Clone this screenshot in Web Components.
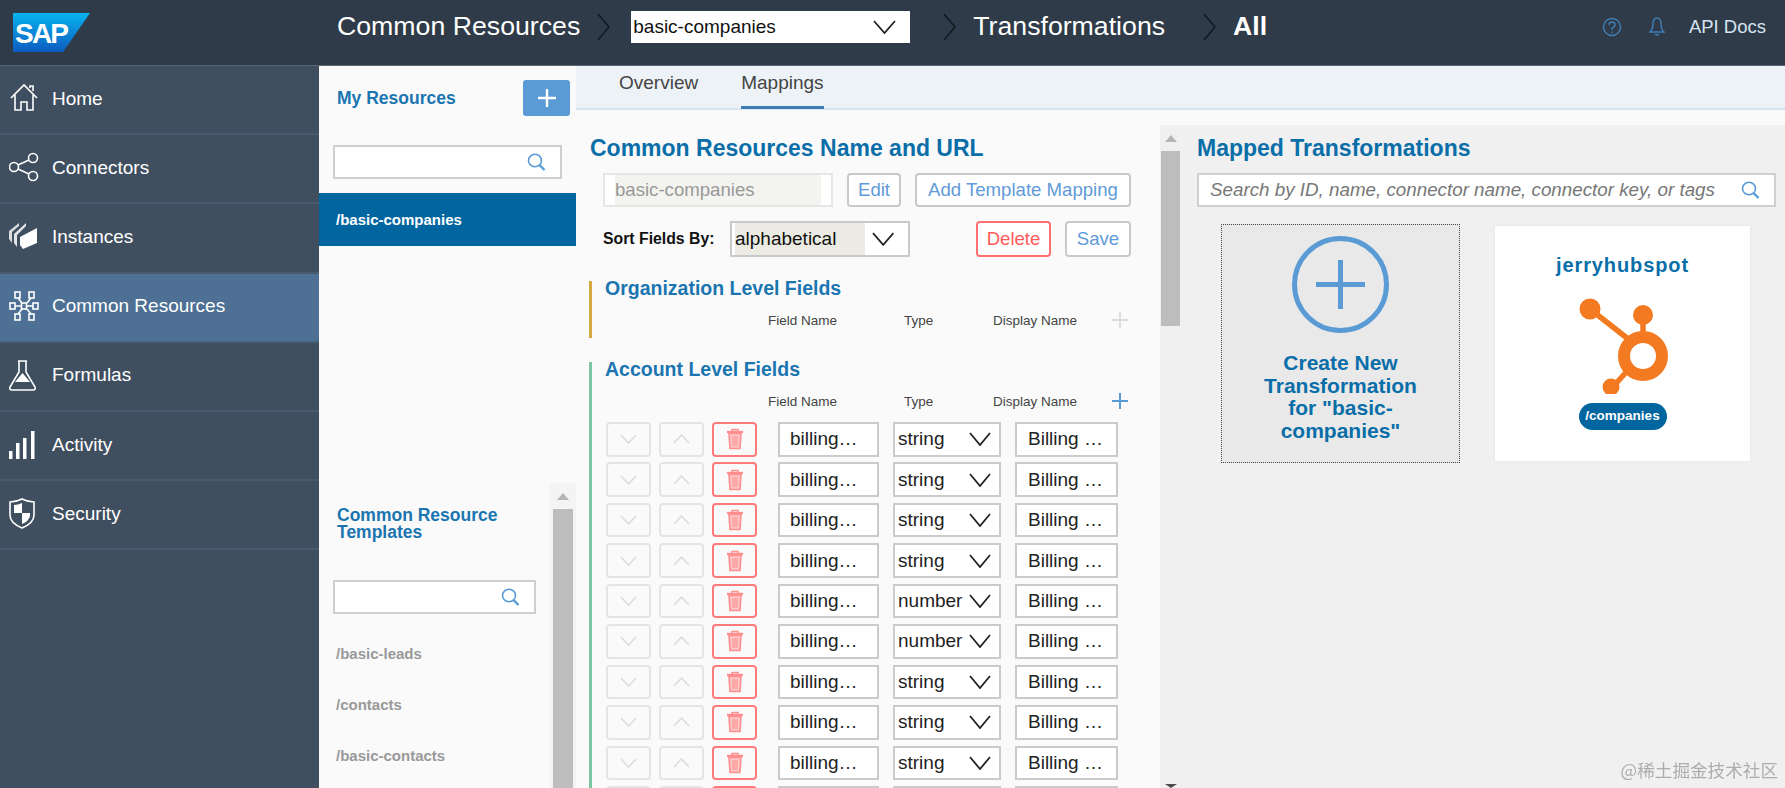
<!DOCTYPE html>
<html lang="en">
<head>
<meta charset="utf-8">
<title>Common Resources</title>
<style>
  html, body { margin: 0; height: 100%; overflow: hidden; }
  body { font-family: "Liberation Sans", Arial, sans-serif; background: #fafafa; }
</style>
</head>
<body>
<app-shell>
  <top-bar slot="top"></top-bar>
  <side-nav slot="nav">
    <nav-item icon="home">Home</nav-item>
    <nav-item icon="connectors">Connectors</nav-item>
    <nav-item icon="instances">Instances</nav-item>
    <nav-item icon="resources" active>Common Resources</nav-item>
    <nav-item icon="formulas">Formulas</nav-item>
    <nav-item icon="activity">Activity</nav-item>
    <nav-item icon="security">Security</nav-item>
  </side-nav>
  <resource-panel slot="list"></resource-panel>
  <main-view slot="main"></main-view>
</app-shell>
<water-mark>@稀土掘金技术社区</water-mark>

<script>
const chevron = (w, h, color, sw, up) => `<svg width="${w}" height="${h}" viewBox="0 0 ${w} ${h}" fill="none" stroke="${color}" stroke-width="${sw}"><path d="${up ? `M1 ${h - 1}L${w / 2} 1L${w - 1} ${h - 1}` : `M1 1L${w / 2} ${h - 1}L${w - 1} 1`}"/></svg>`

const navIcons = {
  home: `<path d="M2 15L15 2l13 13M6 12v15h6v-8h6v8h6V12M21 5V3h3v5"/>`,
  connectors: `<circle cx="24" cy="6" r="4.5"/><circle cx="5" cy="15" r="4.5"/><circle cx="24" cy="24" r="4.5"/><path d="M9 13l11-5M9 17l11 5"/>`,
  instances: `<g fill="#fff" stroke="none"><path d="M0 10l10-8v3L3 11v11l-3-4z" opacity=".8"/><path d="M5 13L17 2v3L8 14v12l-3-4z" opacity=".85"/><path d="M11 16l17-9v15l-14 6-3-4z"/></g>`,
  resources: `<rect x="6" y="1" width="5" height="6"/><rect x="20" y="1" width="5" height="6"/><rect x="1" y="12" width="5" height="6"/><rect x="12.5" y="12" width="5" height="6"/><rect x="24" y="12" width="5" height="6"/><rect x="6" y="23" width="5" height="6"/><rect x="20" y="23" width="5" height="6"/><path d="M6 15h6.500M17.500 15H24M9 7l4 5M22 7l-4 5M9 23l4-5M22 23l-4-5"/>`,
  formulas: `<path d="M9 1h9M10 1v11L1 27q-1 3 2 3h21q3 0 2-3l-9-15V1"/><path d="M6 22l7.500-9 7.500 9z" fill="#fff" stroke="none"/>`,
  activity: `<g fill="#fff" stroke="none"><rect x="0" y="22" width="3.500" height="8"/><rect x="7" y="14" width="3.500" height="16"/><rect x="14" y="9" width="3.500" height="21"/><rect x="22" y="2" width="3.500" height="28"/></g>`,
  security: `<path d="M13 1q6 3 12 3v13q0 8-12 13Q1 25 1 17V4q6 0 12-3z"/><path d="M5 7q4 0 8-2v10H5zM13 15h8v3q-1 5-8 8z" fill="#fff" stroke="none"/>`
}

class AppShell extends HTMLElement {
  constructor() {
    super()
    this.attachShadow({ mode: 'open' })
    this.shadowRoot.innerHTML = `
    <style>
      :host { display: grid; width: 1785px; height: 788px; overflow: hidden;
        grid-template-columns: 319px 257px 1fr; grid-template-rows: 66px 722px; }
      ::slotted([slot=top]) { grid-column: 1 / 4; }
    </style>
    <slot name="top"></slot><slot name="nav"></slot><slot name="list"></slot><slot name="main"></slot>`
  }
}

class TopBar extends HTMLElement {
  constructor() {
    super()
    this.attachShadow({ mode: 'open' })
    const sep = `<svg class="sep" width="13" height="28" viewBox="0 0 13 28" fill="none" stroke="#11181f" stroke-width="1.500"><path d="M1 1l11 13L1 27"/></svg>`
    this.shadowRoot.innerHTML = `
    <style>
      :host { display: flex; align-items: center; box-sizing: border-box; height: 66px; padding: 0 19px 12px 0;
        background: #2f3b48; border-bottom: 1px solid #5c6672; color: #fff; font-size: 26.700px; }
      .logo { width: 337px; padding: 12px 0 0 13px; box-sizing: border-box; }
      .logo svg { display: block; }
      .sep { margin: 0 17px; }
      .pick { display: flex; align-items: center; justify-content: space-between; box-sizing: border-box; width: 279px; height: 32px;
        padding: 0 14px 0 2px; margin: 0 16px 0 4px; background: #fff; color: #111; font-size: 19px; }
      .all { font-weight: 700; }
      .tools { display: flex; align-items: center; margin-left: auto; color: #d5e4f0; font-size: 18.500px; }
      .help { margin-right: 27px; }
      .bell { margin-right: 24px; }
    </style>
    <div class="logo"><svg width="78" height="39" viewBox="0 0 78 39">
      <defs><linearGradient id="sapg" x1="0" y1="0" x2="0" y2="1"><stop offset="0" stop-color="#08b4ee"/><stop offset="1" stop-color="#0c5cc0"/></linearGradient></defs>
      <path d="M0 0H77L50 39H0z" fill="url(#sapg)"/>
      <text x="2" y="30" font-family="Liberation Sans" font-weight="700" font-size="28" letter-spacing="-1.800" fill="#fff">SAP</text>
    </svg></div>
    <span>Common Resources</span>
    ${sep}
    <span class="pick">basic-companies ${chevron(23, 14, '#222', 1.8)}</span>
    ${sep}
    <span>Transformations</span>
    <span style="margin-left:21px"></span>${sep}
    <span class="all">All</span>
    <div class="tools">
      <svg class="help" width="20" height="20" viewBox="0 0 20 20" fill="none" stroke="#3f7fb5" stroke-width="1.400"><circle cx="10" cy="10" r="8.500"/><path d="M7 8q0-3 3-3t3 3q0 2-3 3v2M10 14.500v1.500"/></svg>
      <svg class="bell" width="16" height="20" viewBox="0 0 16 20" fill="none" stroke="#3f7fb5" stroke-width="1.400"><path d="M8 1q4 0 4 6 0 5 3 8H1q3-3 3-8 0-6 4-6zM6 17q2 2 4 0"/></svg>
      <span>API Docs</span>
    </div>`
  }
}

class SideNav extends HTMLElement {
  constructor() {
    super()
    this.attachShadow({ mode: 'open' })
    this.shadowRoot.innerHTML = `
    <style>:host { display: flex; flex-direction: column; background: #3f4f5f; }</style>
    <slot></slot>`
  }
}

class NavItem extends HTMLElement {
  constructor() {
    super()
    this.attachShadow({ mode: 'open' })
    const icon = navIcons[this.getAttribute('icon')] || ''
    this.shadowRoot.innerHTML = `
    <style>
      :host { display: flex; align-items: center; gap: 13px; box-sizing: border-box; height: 69.200px; padding: 0 0 2px 9px;
        border-bottom: 2px solid #475a6e; color: #fff; font-size: 19px; background: #3f4f5f; }
      :host([active]) { background: #4e7094; border-bottom-color: #46607b; }
      svg { flex: none; }
    </style>
    <svg width="30" height="31" viewBox="0 0 30 31" fill="none" stroke="#fff" stroke-width="1.600">${icon}</svg>
    <slot></slot>`
  }
}

class SearchBox extends HTMLElement {
  constructor() {
    super()
    this.attachShadow({ mode: 'open' })
    const hint = this.getAttribute('placeholder') || ''
    this.shadowRoot.innerHTML = `
    <style>
      :host { display: flex; align-items: center; justify-content: space-between; box-sizing: border-box; height: 34px;
        padding: 0 14px 0 11px; background: #fff; border: 2px solid #cfcfcf; color: #777; font-style: italic; font-size: 18.800px; }
      svg { flex: none; }
    </style>
    <span>${hint}</span>
    <svg width="19" height="18" viewBox="0 0 19 18" fill="none" stroke="#5a9bd5" stroke-width="1.600"><ellipse cx="8" cy="7.500" rx="6.500" ry="6.200"/><path d="M12.500 12l5 5" stroke-width="2.400"/></svg>`
  }
}

class ScrollRail extends HTMLElement {
  constructor() {
    super()
    this.attachShadow({ mode: 'open' })
    const h = this.getAttribute('thumb') || '175'
    const end = this.hasAttribute('end')
    this.shadowRoot.innerHTML = `
    <style>
      :host { display: flex; flex-direction: column; align-items: center; box-sizing: border-box; background: #f4f4f4; overflow: hidden; }
      .arrow { flex: none; height: 26px; display: flex; align-items: center; justify-content: center; }
      .tri { width: 0; height: 0; border: 6px solid transparent; border-top: 0; border-bottom: 7px solid #b5b5b5; }
      .thumb { flex: none; align-self: stretch; height: ${h}px; margin: 0 var(--rail-inset, 1px); background: #bdbdbd; }
      .rest { flex: 1; }
      .dark { flex: none; width: 0; height: 0; border: 6px solid transparent; border-bottom: 0; border-top: 4px solid #4a4a4a; }
    </style>
    <div class="arrow"><div class="tri"></div></div>
    <div class="thumb"></div>
    <div class="rest"></div>
    ${end ? '<div class="dark"></div>' : ''}`
  }
}

class ResourcePanel extends HTMLElement {
  constructor() {
    super()
    this.attachShadow({ mode: 'open' })
    this.shadowRoot.innerHTML = `
    <style>
      :host { display: flex; flex-direction: column; background: #fafafa; overflow: hidden; }
      .mine { flex: none; height: 417px; box-sizing: border-box; padding-top: 14px; }
      .head { display: flex; align-items: center; justify-content: space-between; padding: 0 6px 0 18px; }
      h3 { margin: 0; color: #1b75b0; font-size: 17.500px; }
      .add { width: 47px; height: 36px; border-radius: 3px; background: #5a9bd5; display: flex; align-items: center; justify-content: center; }
      search-box { margin: 0 14px; width: 229px; }
      .mine search-box { margin-top: 29px; }
      .sel { margin-top: 14px; height: 53px; padding-left: 17px; display: flex; align-items: center; background: #01659f; color: #fff; font-weight: 700; font-size: 15px; }
      .tpl { flex: 1; display: flex; min-height: 0; }
      .col { flex: 1; padding-top: 24px; }
      .col h3 { line-height: 17px; padding-left: 18px; }
      .col search-box { margin-top: 39px; width: 203px; }
      .col a { display: block; margin-left: 17px; color: #999; font-weight: 700; font-size: 15px; }
      .col a:nth-of-type(1) { margin-top: 31px; }
      .col a:nth-of-type(n+2) { margin-top: 34px; }
      scroll-rail { flex: none; width: 26px; --rail-inset: 3px; }
    </style>
    <section class="mine">
      <div class="head"><h3>My Resources</h3>
        <div class="add"><svg width="18" height="18" viewBox="0 0 18 18" stroke="#fff" stroke-width="2.400"><path d="M9 0v18M0 9h18"/></svg></div>
      </div>
      <search-box></search-box>
      <div class="sel">/basic-companies</div>
    </section>
    <section class="tpl">
      <div class="col">
        <h3>Common Resource<br>Templates</h3>
        <search-box></search-box>
        <a>/basic-leads</a><a>/contacts</a><a>/basic-contacts</a>
      </div>
      <scroll-rail thumb="400"></scroll-rail>
    </section>`
  }
}

class TabStrip extends HTMLElement {
  constructor() {
    super()
    this.attachShadow({ mode: 'open' })
    this.shadowRoot.innerHTML = `
    <style>
      :host { display: flex; gap: 43px; box-sizing: border-box; height: 44px; padding-left: 43px; background: #edf2f7;
        border-bottom: 2px solid #d6e4ef; font-size: 19px; color: #444; }
      span { display: block; height: 43px; line-height: 34px; box-sizing: border-box; }
      .on { border-bottom: 3px solid #3f7cb0; }
    </style>
    <span>Overview</span><span class="on">Mappings</span>`
  }
}

class PlainBtn extends HTMLElement {
  constructor() {
    super()
    this.attachShadow({ mode: 'open' })
    this.shadowRoot.innerHTML = `
    <style>
      :host { display: flex; align-items: center; justify-content: center; box-sizing: border-box; padding: 0 10px; height: 34px;
        border: 2px solid #c9c9c9; border-radius: 4px; background: #fff; color: #5f9bd8; font-size: 18.600px; }
      :host([danger]) { border-color: #ff6f6f; color: #ff5a5a; }
    </style>
    <slot></slot>`
  }
}

class FieldRow extends HTMLElement {
  constructor() {
    super()
    this.attachShadow({ mode: 'open' })
    const type = this.getAttribute('type') || 'string'
    this.shadowRoot.innerHTML = `
    <style>
      :host { display: flex; flex: none; height: 34.500px; padding-left: 1px; color: #222; font-size: 19px; }
      .b { box-sizing: border-box; width: 45px; margin-right: 8px; display: flex; align-items: center; justify-content: center;
        border: 2px solid #e4e4e4; border-radius: 4px; background: #fafafa; }
      .del { border-color: #ff7a7a; margin-right: 21px; }
      .i { box-sizing: border-box; display: flex; align-items: center; background: #fff; border: 2px solid #cbcbcb; margin-right: 14px; white-space: nowrap; }
      .name { width: 101px; padding-left: 10px; }
      .type { width: 108px; padding: 0 8px 0 3px; justify-content: space-between; }
      .disp { width: 103px; padding-left: 11px; }
      svg { flex: none; }
    </style>
    <div class="b">${chevron(17, 10, '#dcdcdc', 1.6)}</div>
    <div class="b">${chevron(17, 10, '#dcdcdc', 1.6, true)}</div>
    <div class="b del"><svg width="18" height="22" viewBox="0 0 18 22" fill="none" stroke="#ff8f8f"><path d="M1 4h16" stroke-width="2.400"/><path d="M6 3V1.500h6V3" stroke-width="1.500"/><path d="M3 5.500l1 15h10l1-15z" fill="#ffc4c4" stroke-width="1.600"/><path d="M7 8v10M9 8v10M11 8v10" stroke-width="1"/></svg></div>
    <div class="i name">billing…</div>
    <div class="i type">${type}${chevron(22, 14, '#222', 1.8)}</div>
    <div class="i disp">Billing …</div>`
  }
}

class FieldGroup extends HTMLElement {
  constructor() {
    super()
    this.attachShadow({ mode: 'open' })
    const addColor = this.getAttribute('add') || '#ddd'
    this.shadowRoot.innerHTML = `
    <style>
      :host { display: block; box-sizing: border-box; padding: 0 0 8px 13px; border-left: 3px solid var(--bar, #7cc6a2); margin-left: -1px; }
      h4 { margin: 0; height: 14px; line-height: 14px; color: #1b75b0; font-size: 19.500px; white-space: nowrap; }
      .labels { display: grid; grid-template-columns: 163px 136px 89px 119px 16px; margin-top: 15px; height: 20px; align-items: center;
        color: #444; font-size: 13.500px; }
      .rows { display: flex; flex-direction: column; gap: 5.950px; margin-top: 11px; }
      ::slotted(*) { flex: none; }
      .rows:not(:has(*)) { display: none; }
    </style>
    <h4>${this.getAttribute('title')}</h4>
    <div class="labels">
      <span></span><span>Field Name</span><span>Type</span><span>Display Name</span>
      <svg width="16" height="16" viewBox="0 0 16 16" stroke="${addColor}" stroke-width="2"><path d="M8 0v16M0 8h16"/></svg>
    </div>
    <div class="rows"><slot></slot></div>`
    if (!this.children.length) this.shadowRoot.querySelector('.rows').style.display = 'none'
  }
}

class MappingEditor extends HTMLElement {
  constructor() {
    super()
    this.attachShadow({ mode: 'open' })
    const types = ['string', 'string', 'string', 'string', 'number', 'number', 'string', 'string', 'string', 'string', 'string']
    this.shadowRoot.innerHTML = `
    <style>
      :host { display: block; width: 584px; box-sizing: border-box; padding: 24px 0 0 14px; background: #fafafa; overflow: hidden; }
      h2 { margin: 0; height: 28px; line-height: 28px; color: #0a6ea8; font-size: 23px; white-space: nowrap; }
      .line { display: flex; margin-left: 13px; }
      .one { margin-top: 11px; }
      .two { margin-top: 14px; align-items: center; }
      .two plain-btn { height: 36px; }
      .name { box-sizing: border-box; width: 230px; height: 34px; padding: 0 10px; margin-right: 14px; background: #fff; border: 2px solid #e6e6e6; }
      .name div { height: 100%; line-height: 30px; background: #f3f3ef; color: #999; font-size: 18.600px; }
      .sort { width: 127px; font-weight: 700; font-size: 15.800px; color: #111; white-space: nowrap; }
      .pick { box-sizing: border-box; display: flex; align-items: center; width: 180px; height: 36px; padding: 0 14px 0 3px; margin-right: 66px;
        background: #fff; border: 2px solid #c9c9c9; font-size: 19px; color: #111; }
      .pick b { display: block; font-weight: 400; width: 133px; height: 100%; line-height: 32px; background: #ebebe3; margin-right: 7px; }
      field-group { margin-top: 24px; }
      .org { --bar: #d4a93f; }
      .rows { display: contents; }
    </style>
    <h2>Common Resources Name and URL</h2>
    <div class="line one">
      <div class="name"><div>basic-companies</div></div>
      <plain-btn style="width:54px;margin-right:14px">Edit</plain-btn>
      <plain-btn style="width:216px">Add Template Mapping</plain-btn>
    </div>
    <div class="line two">
      <span class="sort">Sort Fields By:</span>
      <div class="pick"><b>alphabetical</b>${chevron(23, 14, '#222', 1.8)}</div>
      <plain-btn danger style="width:75px;margin-right:14px">Delete</plain-btn>
      <plain-btn style="width:66px">Save</plain-btn>
    </div>
    <field-group class="org" title="Organization Level Fields"></field-group>
    <field-group title="Account Level Fields" add="#5a9bd5">
      ${types.map(t => `<field-row type="${t}"></field-row>`).join('')}
    </field-group>`
  }
}

class CreateCard extends HTMLElement {
  constructor() {
    super()
    this.attachShadow({ mode: 'open' })
    this.shadowRoot.innerHTML = `
    <style>
      :host { display: flex; flex-direction: column; align-items: center; box-sizing: border-box; width: 239px; height: 239px; padding-top: 11px;
        background: #e9e9e9; border: 1px dotted #444; color: #0a6ea8; font-weight: 700; font-size: 21px; line-height: 22.500px; text-align: center; }
      svg { flex: none; }
      div { width: 170px; margin-top: 19px; }
    </style>
    <svg width="97" height="97" viewBox="0 0 97 97" fill="none" stroke="#5a9bd5"><circle cx="48.500" cy="48.500" r="46" stroke-width="5"/><path d="M48.500 24v49M24 48.500h49" stroke-width="5"/></svg>
    <div><slot></slot></div>`
  }
}

class ConnectorCard extends HTMLElement {
  constructor() {
    super()
    this.attachShadow({ mode: 'open' })
    this.shadowRoot.innerHTML = `
    <style>
      :host { display: flex; flex-direction: column; align-items: center; box-sizing: border-box; width: 255px; height: 235px; margin-top: 2px; padding-top: 26px;
        background: #fff; box-shadow: 0 0 2px #ddd; }
      .t { height: 26px; line-height: 26px; color: #0a6ea8; font-weight: 700; font-size: 20px; letter-spacing: .9px; }
      svg { flex: none; margin: 18px 0 0 0; }
      .pill { margin-top: 9px; width: 88px; height: 27px; line-height: 26px; text-align: center; border-radius: 14px; background: #01659f; color: #fff; font-weight: 700; font-size: 13.500px; }
    </style>
    <div class="t"><slot></slot></div>
    <svg width="92" height="98" viewBox="0 0 92 98">
      <g fill="none" stroke="#f47a22"><circle cx="66" cy="60" r="19" stroke-width="12"/><path d="M13 13l42 33M66 19v24" stroke-width="5.500"/><path d="M34 93l18-20" stroke-width="5.500"/></g>
      <g fill="#f47a22"><circle cx="13" cy="13" r="10.500"/><circle cx="66" cy="19" r="10"/><circle cx="34" cy="91" r="8.500"/></g>
    </svg>
    <div class="pill">${this.getAttribute('path')}</div>`
  }
}

class MappedPanel extends HTMLElement {
  constructor() {
    super()
    this.attachShadow({ mode: 'open' })
    this.shadowRoot.innerHTML = `
    <style>
      :host { display: flex; flex: 1; margin-top: 15px; background: #f0f0f0; overflow: hidden; }
      scroll-rail { flex: none; width: 21px; background: #f0f0f0; }
      .body { flex: 1; padding: 9px 9px 0 16px; }
      h2 { margin: 0; height: 28px; line-height: 28px; color: #0a6ea8; font-size: 23px; }
      search-box { margin-top: 11px; }
      .cards { display: flex; gap: 35px; align-items: flex-start; margin: 17px 0 0 24px; }
    </style>
    <scroll-rail thumb="175" end></scroll-rail>
    <div class="body">
      <h2>Mapped Transformations</h2>
      <search-box placeholder="Search by ID, name, connector name, connector key, or tags"></search-box>
      <div class="cards">
        <create-card>Create New Transformation for "basic-companies"</create-card>
        <connector-card path="/companies">jerryhubspot</connector-card>
      </div>
    </div>`
  }
}

class MainView extends HTMLElement {
  constructor() {
    super()
    this.attachShadow({ mode: 'open' })
    this.shadowRoot.innerHTML = `
    <style>
      :host { display: flex; flex-direction: column; min-height: 0; overflow: hidden; background: #fafafa; }
      .split { flex: 1; display: flex; min-height: 0; }
    </style>
    <tab-strip></tab-strip>
    <div class="split">
      <mapping-editor></mapping-editor>
      <mapped-panel></mapped-panel>
    </div>`
  }
}

class WaterMark extends HTMLElement {
  constructor() {
    super()
    this.attachShadow({ mode: 'open' })
    this.shadowRoot.innerHTML = `
    <style>
      :host { position: fixed; right: 7px; bottom: 6px; color: #adadad; font: 17.600px "Noto Sans CJK SC", "Liberation Sans", sans-serif; }
    </style>
    <slot></slot>`
  }
}

customElements.define('app-shell', AppShell)
customElements.define('top-bar', TopBar)
customElements.define('side-nav', SideNav)
customElements.define('nav-item', NavItem)
customElements.define('search-box', SearchBox)
customElements.define('scroll-rail', ScrollRail)
customElements.define('resource-panel', ResourcePanel)
customElements.define('tab-strip', TabStrip)
customElements.define('plain-btn', PlainBtn)
customElements.define('field-row', FieldRow)
customElements.define('field-group', FieldGroup)
customElements.define('mapping-editor', MappingEditor)
customElements.define('create-card', CreateCard)
customElements.define('connector-card', ConnectorCard)
customElements.define('mapped-panel', MappedPanel)
customElements.define('main-view', MainView)
customElements.define('water-mark', WaterMark)
</script>
</body>
</html>
